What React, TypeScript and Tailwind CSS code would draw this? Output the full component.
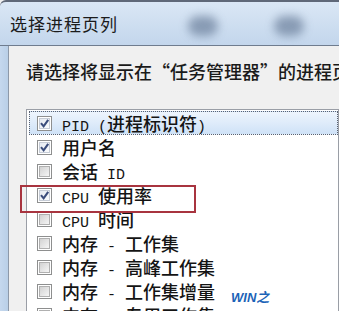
import React from 'react'

const rows = [
  { label: 'PID (进程标识符)', checked: true, selected: true },
  { label: '用户名', checked: true },
  { label: '会话 ID', checked: false },
  { label: 'CPU 使用率', checked: true },
  { label: 'CPU 时间', checked: false },
  { label: '内存 - 工作集', checked: false },
  { label: '内存 - 高峰工作集', checked: false },
  { label: '内存 - 工作集增量', checked: false },
  { label: '内存 - 专用工作集', checked: false },
]

const cjk = '"Noto Sans CJK SC", "Noto Sans", sans-serif'
const mono = '"Liberation Mono", "Noto Sans CJK SC", monospace'

// Latin runs render half-width like SimSun, CJK runs full-width
function Label({ text }: { text: string }) {
  const parts = text.match(/[\x00-\x7f]+|[^\x00-\x7f]+/g) ?? []
  return (
    <span className="flex items-center whitespace-pre">
      {parts.map((p, i) =>
        /^[\x00-\x7f]+$/.test(p) ? (
          <span key={i} className="relative top-[5px] text-[15px] leading-[12px]" style={{ fontFamily: mono }}>{p}</span>
        ) : (
          <span key={i} className="text-[18px] leading-[20px] font-medium">{p}</span>
        )
      )}
    </span>
  )
}

function CheckBox({ checked }: { checked: boolean }) {
  return (
    <svg width="15" height="15" viewBox="0 0 15 15" className="shrink-0">
      <defs>
        <linearGradient id="cbOff" x1="0" y1="0" x2="1" y2="1">
          <stop offset="0" stopColor="#d0d0d0" />
          <stop offset="1" stopColor="#f7f7f7" />
        </linearGradient>
        <linearGradient id="cbOn" x1="0" y1="0" x2="1" y2="1">
          <stop offset="0" stopColor="#e4e9f1" />
          <stop offset="1" stopColor="#fbfcfd" />
        </linearGradient>
      </defs>
      <rect x="0.5" y="0.5" width="14" height="14" fill="#fff" stroke="#8e8f8f" />
      <rect x="2.5" y="2.5" width="10" height="10" fill={checked ? 'url(#cbOn)' : 'url(#cbOff)'} stroke={checked ? '#c6ccd6' : '#b0b0b0'} />
      {checked && (
        <path d="M4 7.2 L6.6 10.3 L11.2 3.8" fill="none" stroke="#3b4d7c" strokeWidth="2.1" />
      )}
    </svg>
  )
}

export default function App() {
  return (
    <div className="w-[339px] h-[311px] overflow-hidden flex flex-col bg-[#f0f0f0]" style={{ fontFamily: cjk }}>
      {/* Title bar */}
      <div className="relative h-[46px] shrink-0 border-t-2 border-b border-t-[#5f6878] border-b-[#6f7c8e] rounded-tl-[6px] bg-gradient-to-b from-[#dae7f5] to-[#c3d6ec]">
        <div className="absolute left-[188px] top-[14px] w-[30px] h-[20px] rounded-full bg-[#6b7f9b] opacity-70 blur-[5px]" />
        <div className="absolute left-[274px] top-[14px] w-[30px] h-[20px] rounded-full bg-[#6b7f9b] opacity-70 blur-[5px]" />
        <div className="relative pl-[10px] pt-[11px] text-[17px] leading-[22px] text-[#1b1b1b] tracking-[1px]">选择进程页列</div>
      </div>

      <div className="flex flex-1 min-h-0">
        {/* Left frame */}
        <div className="w-[9px] shrink-0 bg-gradient-to-r from-[#c5d8ee] to-[#b9cfe7] border-r border-[#8d99a9]" />

        {/* Content */}
        <div className="relative flex-1 min-w-0 pl-[17px] pt-[13px]">
          <div className="whitespace-nowrap text-[18px] leading-[24px] font-medium text-[#1a1a1a]">
            请选择将显示在“任务管理器”的进程页列
          </div>

          <div className="mt-[26px] border border-[#9a9ea6] bg-white pt-px pl-[2px]">
            {rows.map((r) => (
              <div
                key={r.label}
                className={`flex items-center h-[24px] pl-[7px] gap-[10px] text-[#141414] ${
                  r.selected ? 'bg-gradient-to-b from-[#eef5fd] to-[#cfe2f7] border border-dotted border-[#5b6270]' : 'border border-transparent'
                }`}
              >
                <CheckBox checked={r.checked} />
                <Label text={r.label} />
              </div>
            ))}
          </div>

          {/* Red highlight annotation */}
          <div className="absolute left-[11px] top-[139px] w-[176px] h-[28px] border-2 border-[#a8343f]" />

          {/* Watermark */}
          <div
            className="absolute left-[222px] top-[245px] text-[13px] font-bold italic text-[#1c63b7] leading-none"
            style={{ fontFamily: '"Liberation Sans", "Noto Sans CJK SC", sans-serif' }}
          >
            WIN之
          </div>
        </div>
      </div>
    </div>
  )
}
